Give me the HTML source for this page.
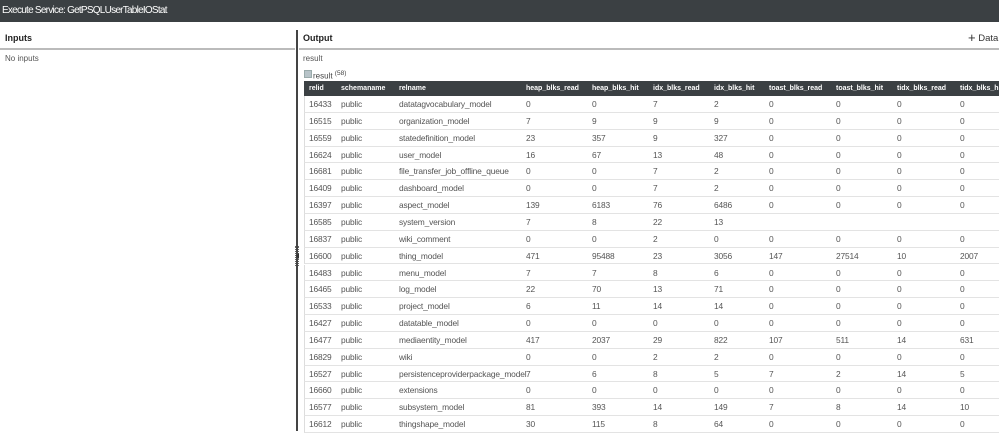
<!DOCTYPE html>
<html><head><meta charset="utf-8"><style>
*{margin:0;padding:0;box-sizing:border-box}
body{width:999px;height:431px;overflow:hidden;background:#fff;font-family:"Liberation Sans",Arial,sans-serif;position:relative;color:#333}
.top{position:absolute;left:0;top:0;width:999px;height:22px;background:#3b4043;color:#fff;font-size:10px;letter-spacing:-0.75px;line-height:22px;padding-left:2px;white-space:nowrap}
.t{position:absolute;font-size:9px;font-weight:bold;color:#222}
.ul{position:absolute;height:2px;background:#bbb}
.vb{position:absolute;left:296px;top:30px;width:2px;height:401px;background:#444}
.s{position:absolute;font-size:8px;color:#555;white-space:nowrap}
.hd{position:absolute;left:304px;top:81px;width:695px;height:15px;background:#3b4043;color:#fff;font-size:7px;font-weight:bold}
.row{position:absolute;left:304px;width:695px;height:16.85px;border-bottom:1px solid #e3e3e3;border-left:1px solid #ddd;font-size:8.4px;letter-spacing:-0.15px;color:#555}
.c{position:absolute;top:0;white-space:nowrap}
.hd .c{line-height:15px}
.row .c{line-height:16px}
</style></head><body>
<div class="top">Execute Service: GetPSQLUserTableIOStat</div>
<div class="t" style="left:5px;top:33px">Inputs</div>
<div class="ul" style="left:0;top:48px;width:295px"></div>
<div class="s" style="left:5px;top:54px">No inputs</div>
<div class="vb"></div>
<div style="position:absolute;left:295px;top:246px;width:4px;height:20px;border-left:1px dotted #666;border-right:1px dotted #666"></div>
<div style="position:absolute;left:296px;top:253px;width:0;height:0;border-top:3px solid transparent;border-bottom:3px solid transparent;border-right:3px solid #333"></div>
<div class="t" style="left:303px;top:33px">Output</div>
<div class="ul" style="left:299px;top:48px;width:700px"></div>
<div style="position:absolute;left:968px;top:30px;font-size:9.5px;color:#333;white-space:nowrap"><span style="font-size:13px;vertical-align:-1px">+</span> Data</div>
<div class="s" style="left:303px;top:54px">result</div>
<div style="position:absolute;left:304px;top:70px;width:8px;height:8px;background:#b7c3c8;border:1px solid #9aa"></div>
<div class="s" style="left:313px;top:70px;color:#444">result <sup style="font-size:6.5px">(58)</sup></div>
<div class="hd" id="hd"></div>
<div id="rows"></div>
<script>
var X=[5,37,95,222,288,349,410,465,532,593,656];
var H=["relid","schemaname","relname","heap_blks_read","heap_blks_hit","idx_blks_read","idx_blks_hit","toast_blks_read","toast_blks_hit","tidx_blks_read","tidx_blks_hit"];
var D=[
"16433 datatagvocabulary_model 0 0 7 2 0 0 0 0",
"16515 organization_model 7 9 9 9 0 0 0 0",
"16559 statedefinition_model 23 357 9 327 0 0 0 0",
"16624 user_model 16 67 13 48 0 0 0 0",
"16681 file_transfer_job_offline_queue 0 0 7 2 0 0 0 0",
"16409 dashboard_model 0 0 7 2 0 0 0 0",
"16397 aspect_model 139 6183 76 6486 0 0 0 0",
"16585 system_version 7 8 22 13",
"16837 wiki_comment 0 0 2 0 0 0 0 0",
"16600 thing_model 471 95488 23 3056 147 27514 10 2007",
"16483 menu_model 7 7 8 6 0 0 0 0",
"16465 log_model 22 70 13 71 0 0 0 0",
"16533 project_model 6 11 14 14 0 0 0 0",
"16427 datatable_model 0 0 0 0 0 0 0 0",
"16477 mediaentity_model 417 2037 29 822 107 511 14 631",
"16829 wiki 0 0 2 2 0 0 0 0",
"16527 persistenceproviderpackage_model 7 6 8 5 7 2 14 5",
"16660 extensions 0 0 0 0 0 0 0 0",
"16577 subsystem_model 81 393 14 149 7 8 14 10",
"16612 thingshape_model 30 115 8 64 0 0 0 0"];
var h="";H.forEach(function(t,i){h+='<div class="c" style="left:'+X[i]+'px">'+t+'</div>'});
document.getElementById('hd').innerHTML=h;
var r="";D.forEach(function(l,j){var p=l.split(" ");p.splice(1,0,"public");
r+='<div class="row" style="top:'+(96+j*16.85)+'px">';p.forEach(function(t,i){r+='<div class="c" style="left:'+(X[i]-1)+'px">'+t+'</div>'});r+='</div>'});
document.getElementById('rows').innerHTML=r;
</script>
</body></html>
